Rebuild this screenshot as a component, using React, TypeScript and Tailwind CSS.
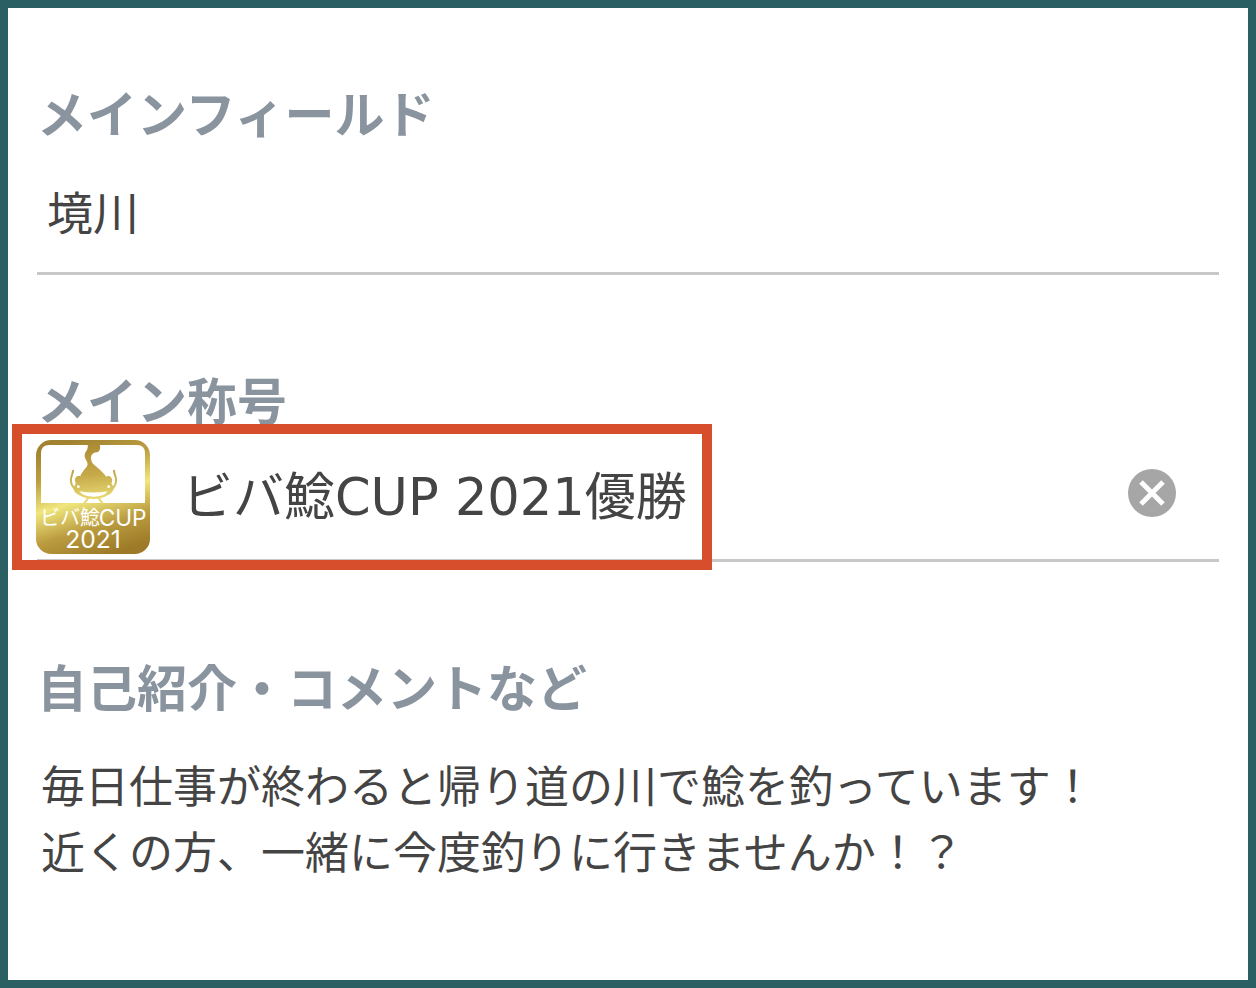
import { useState } from 'react'

function CupBadge() {
  return (
    <svg className="-ml-px w-[114px] h-[114px] flex-shrink-0" viewBox="0 0 342 342" aria-hidden="true">
      <defs>
        <linearGradient id="gold" gradientUnits="userSpaceOnUse" x1="120" y1="0" x2="222" y2="342">
          <stop offset="0" stopColor="#a18230" />
          <stop offset="0.25" stopColor="#bd9f42" />
          <stop offset="0.5" stopColor="#f0e67c" />
          <stop offset="0.75" stopColor="#bb9c40" />
          <stop offset="1" stopColor="#9c7a28" />
        </linearGradient>
        <linearGradient id="fish" gradientUnits="userSpaceOnUse" x1="160" y1="14" x2="176" y2="190">
          <stop offset="0" stopColor="#ab8c36" />
          <stop offset="0.5" stopColor="#c5a848" />
          <stop offset="1" stopColor="#eee27a" />
        </linearGradient>
      </defs>
      <rect width="342" height="342" rx="46" fill="url(#gold)" />
      <path d="M15 189V40Q15 15 40 15H302Q327 15 327 40V189Z" fill="#fff" />

      {/* Catfish */}
      <path
        d="M155 14H191C195 24 191 34 183 37C172 36 163 46 165 57C168 74 178 76 190 88C200 98 206 102 210 110C220 104 231 113 228 125C225 130 227 133 231 137C237 149 227 160 215 166C202 174 188 177 173 177C156 177 142 173 130 166C118 160 109 150 115 138C120 133 120 130 117 124C115 112 124 106 133 109C135 99 147 88 153 79C160 66 144 58 146 44C147 35 158 28 155 14Z"
        fill="url(#fish)"
      />
      <path
        d="M111 92C110 106 102 112 105 126C107 138 114 146 124 156M234 92C235 106 243 112 240 126C238 138 231 146 221 156"
        fill="none"
        stroke="url(#fish)"
        strokeWidth="6"
        strokeLinecap="round"
      />
      <path d="M130 154Q172 161 215 154Q205 170 173 170Q141 170 130 154Z" fill="#fff" />
      <circle cx="127" cy="140" r="4" fill="#fff" />
      <circle cx="218" cy="140" r="4" fill="#fff" />
      <path d="M157 174L144 191M188 174L200 191" stroke="#e6d86c" strokeWidth="6" />

      <g fill="#fff" fontFamily="Inter, 'Noto Sans CJK JP', sans-serif">
        <text x="12" y="256" fontSize="60">ビバ鯰</text>
        <text x="188" y="257" fontSize="68">CUP</text>
        <text x="171" y="325" fontSize="74" textAnchor="middle">2021</text>
      </g>
    </svg>
  )
}

export default function App() {
  const [field, setField] = useState('境川')
  const [title, setTitle] = useState('ビバ鯰CUP 2021優勝')
  const [comment, setComment] = useState(
    '毎日仕事が終わると帰り道の川で鯰を釣っています！\n近くの方、一緒に今度釣りに行きませんか！？'
  )

  const labelClass = "block text-[50px] leading-[60px] font-bold text-[#8a949f] font-['Noto_Sans_CJK_JP',sans-serif]"

  return (
    <main className="min-h-screen border-8 border-[#2a5f63] bg-white px-[29px] pt-[73px] pb-8 flex flex-col gap-[93px] text-[#444] font-['Noto_Sans_CJK_JP',sans-serif]">
      {/* Main field */}
      <section>
        <label htmlFor="field" className={labelClass}>メインフィールド</label>
        <div className="mt-[11px] h-[123px] pb-1 flex items-center border-b-3 border-[#c8c8c8]">
          <input
            id="field"
            value={field}
            onChange={(e) => setField(e.target.value)}
            className="w-full h-20 px-[10px] text-[46px] bg-transparent outline-none"
          />
        </div>
      </section>

      {/* Main title */}
      <section>
        <label htmlFor="title" className={labelClass}>メイン称号</label>
        <div className="relative mt-[11px] h-[123px] pb-1 flex items-center border-b-3 border-[#c8c8c8]">
          <CupBadge />
          <input
            id="title"
            value={title}
            onChange={(e) => setTitle(e.target.value)}
            className="flex-1 min-w-0 h-20 ml-8 mb-2 text-[51px] bg-transparent outline-none font-['DejaVu_Sans','Noto_Sans_CJK_JP',sans-serif]"
          />
          <button
            type="button"
            aria-label="クリア"
            onClick={() => setTitle('')}
            className="w-12 h-12 mr-[43px] mb-2 flex-shrink-0 rounded-full bg-[#a6a6a6]"
          >
            <svg viewBox="0 0 48 48" className="w-12 h-12" stroke="#fff" strokeWidth="5">
              <path d="M13 13L35 35M35 13L13 35" />
            </svg>
          </button>
          <div className="absolute -left-[25px] -top-[15px] w-[700px] h-[146px] border-10 border-[#d64e2c] pointer-events-none" />
        </div>
      </section>

      {/* Comment */}
      <section>
        <label htmlFor="comment" className={labelClass}>自己紹介・コメントなど</label>
        <textarea
          id="comment"
          rows={2}
          value={comment}
          onChange={(e) => setComment(e.target.value)}
          className="block w-full mt-9 px-1 text-[44px] leading-[66px] bg-transparent outline-none resize-none"
        />
      </section>
    </main>
  )
}
